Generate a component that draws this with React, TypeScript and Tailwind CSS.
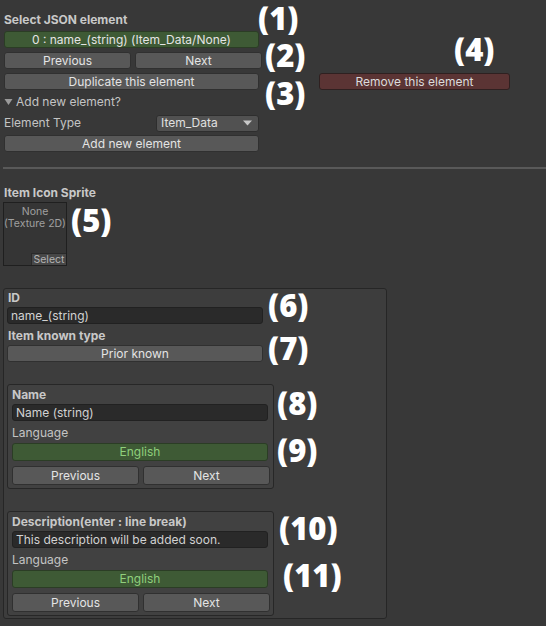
import React from "react";

const ui = { fontFamily: "Inter, 'Liberation Sans', sans-serif" };
const ann = { fontFamily: "'Open Sans', 'Noto Sans', sans-serif" };

function Btn({ children, className = "" }: { children: React.ReactNode; className?: string }) {
  return (
    <div
      className={
        "rounded-[3px] bg-[#585858] border border-[#303030] text-[#e4e4e4] text-[12px] leading-[16px] flex items-center justify-center " +
        className
      }
    >
      {children}
    </div>
  );
}

function Green({ children, className = "", text = "text-[#e4e4e4]" }: { children: React.ReactNode; className?: string; text?: string }) {
  return (
    <div
      className={
        "rounded-[3px] bg-[#3e5a35] border border-[#2b3d25] text-[12px] leading-[16px] flex items-center justify-center " +
        text +
        " " +
        className
      }
    >
      {children}
    </div>
  );
}

function Input({ children, className = "" }: { children: React.ReactNode; className?: string }) {
  return (
    <div
      className={
        "h-[17px] rounded-[3px] bg-[#2a2a2a] border border-[#212121] text-[#d2d2d2] text-[12px] leading-[16px] flex items-center px-[3px] " +
        className
      }
    >
      {children}
    </div>
  );
}

function Ann({ children, className = "" }: { children: React.ReactNode; className?: string }) {
  return (
    <div style={ann} className={"absolute text-white font-extrabold text-[31px] leading-[36px] " + className}>
      {children}
    </div>
  );
}

function LangBox({ title, value }: { title: string; value: string }) {
  return (
    <div className="mt-[22px] w-[267px] h-[105px] rounded-[3px] bg-[#414141] border border-[#272727] pl-[4px] pt-[2px] flex flex-col">
      <div className="text-[12px] leading-[16px] font-bold text-[#c8c8c8]">{title}</div>
      <Input className="w-[256px] mt-[1px]">{value}</Input>
      <div className="text-[12px] leading-[16px] text-[#c4c4c4] mt-[4px]">Language</div>
      <Green className="w-[256px] h-[18px] mt-[2px]" text="text-[#8fd07c]">English</Green>
      <div className="flex gap-[4px] mt-[5px] w-[258px]">
        <Btn className="flex-1 h-[19px]">Previous</Btn>
        <Btn className="flex-1 h-[19px]">Next</Btn>
      </div>
    </div>
  );
}

export default function App() {
  return (
    <div style={ui} className="relative w-[546px] h-[626px] bg-[#383838] overflow-hidden">
      {/* top section */}
      <div className="pl-[4px] pt-[12px] flex flex-col">
        <div className="text-[12px] leading-[16px] font-bold text-[#c8c8c8] h-[16px]">Select JSON element</div>
        <Green className="w-[255px] h-[17px] mt-[3px]">0 : name_(string) (Item_Data/None)</Green>
        <div className="flex gap-[4px] mt-[4px] w-[258px]">
          <Btn className="flex-1 h-[17px]">Previous</Btn>
          <Btn className="flex-1 h-[17px]">Next</Btn>
        </div>
        <div className="flex mt-[4px] items-center">
          <Btn className="w-[255px] h-[17px]">Duplicate this element</Btn>
          <div className="w-[60px]" />
          <div className="h-[17px] w-[191px] rounded-[3px] bg-[#5b3434] border border-[#2f2020] text-[#dcdcdc] text-[12px] leading-[16px] flex items-center justify-center">
            Remove this element
          </div>
        </div>
        <div className="flex items-center h-[16px] mt-[4px] text-[12px] text-[#c4c4c4]">
          <svg width="9" height="8" viewBox="0 0 9 8" className="mr-[3px]">
            <path d="M0.5 1 L8.5 1 L4.5 7 Z" fill="#9a9a9a" />
          </svg>
          Add new element?
        </div>
        <div className="flex items-center mt-[4px] w-[255px]">
          <div className="flex-1 text-[12px] text-[#c4c4c4]">Element Type</div>
          <div className="w-[103px] h-[17px] rounded-[3px] bg-[#515151] border border-[#2e2e2e] text-[#e0e0e0] text-[12px] flex items-center justify-between pl-[4px] pr-[6px]">
            <span>Item_Data</span>
            <svg width="9" height="6" viewBox="0 0 9 6">
              <path d="M0 0.5 L9 0.5 L4.5 5.5 Z" fill="#c8c8c8" />
            </svg>
          </div>
        </div>
        <Btn className="w-[255px] h-[17px] mt-[3px]">Add new element</Btn>
      </div>

      {/* separator */}
      <div className="ml-[3px] mt-[15px] h-[2px] bg-[#595959]" />

      {/* sprite */}
      <div className="pl-[4px] mt-[16px] text-[12px] leading-[16px] font-bold text-[#c8c8c8]">Item Icon Sprite</div>
      <div className="ml-[3px] mt-[1px] w-[64px] h-[64px] bg-[#353535] border border-[#1f1f1f] relative flex flex-col items-center pt-[3px] text-[10.5px] leading-[12px] text-[#a0a0a0] whitespace-nowrap">
        <div>None</div>
        <div>(Texture 2D)</div>
        <div className="absolute right-0 bottom-0 w-[35px] h-[12px] bg-[#474747] border-l border-t border-[#2a2a2a] text-[10.5px] leading-[11px] text-[#b4b4b4] flex items-center justify-center">
          Select
        </div>
      </div>

      {/* main box */}
      <div className="ml-[3px] mt-[22px] w-[384px] h-[331px] rounded-[3px] bg-[#3d3d3d] border border-[#262626] pl-[3px] pt-[1px] flex flex-col">
        <div className="text-[12px] leading-[16px] font-bold text-[#c8c8c8] pl-[1px]">ID</div>
        <Input className="w-[256px] mt-[1px]">name_(string)</Input>
        <div className="text-[12px] leading-[16px] font-bold text-[#c8c8c8] mt-[4px] pl-[1px]">Item known type</div>
        <Btn className="w-[256px] h-[17px] mt-[1px]">Prior known</Btn>

        <LangBox title="Name" value="Name (string)" />
        <LangBox title="Description(enter : line break)" value="This description will be added soon." />
      </div>

      {/* annotations */}
      <Ann className="left-[258px] top-[0px]">(1)</Ann>
      <Ann className="left-[265px] top-[37px]">(2)</Ann>
      <Ann className="left-[265px] top-[75px]">(3)</Ann>
      <Ann className="left-[454px] top-[31px]">(4)</Ann>
      <Ann className="left-[71px] top-[202px]">(5)</Ann>
      <Ann className="left-[268px] top-[287px]">(6)</Ann>
      <Ann className="left-[268px] top-[330px]">(7)</Ann>
      <Ann className="left-[277px] top-[385px]">(8)</Ann>
      <Ann className="left-[277px] top-[432px]">(9)</Ann>
      <Ann className="left-[279px] top-[510px]">(10)</Ann>
      <Ann className="left-[283px] top-[557px]">(11)</Ann>
    </div>
  );
}
